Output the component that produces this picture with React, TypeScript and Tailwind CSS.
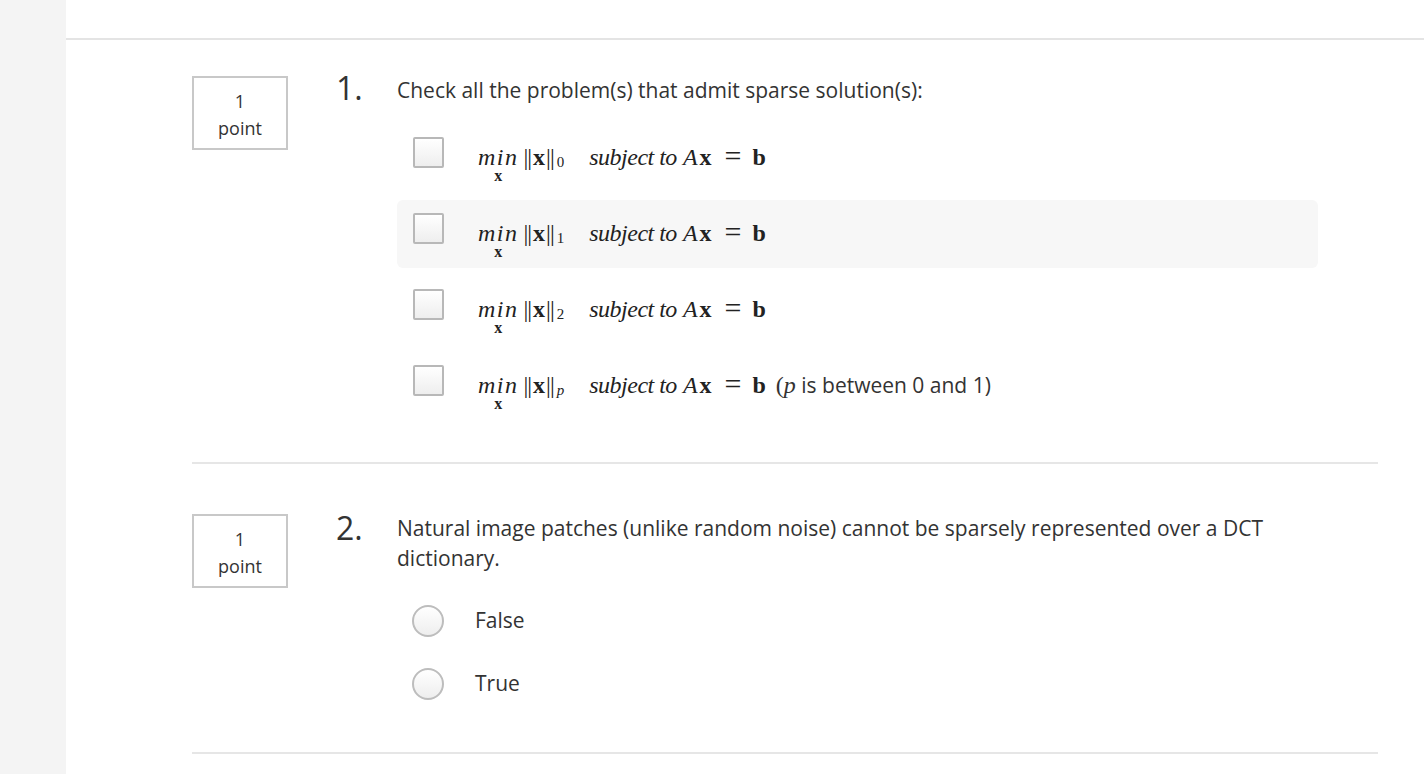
import React from "react"

const sans = "font-['Open_Sans',_'Liberation_Sans',_sans-serif]"
const serif = "font-['Liberation_Serif',_'Times_New_Roman',_serif]"

function PointBox() {
  return (
    <div className="w-[96px] h-[74px] shrink-0 border-2 border-[#c8c8c8] flex flex-col items-center justify-center pt-[3px] text-[18px] leading-[27px] text-[#333]">
      <span>1</span>
      <span>point</span>
    </div>
  )
}

function Checkbox() {
  return (
    <div className="w-[31px] h-[31px] shrink-0 rounded-[2px] border-2 border-[#b8b8b8] bg-gradient-to-b from-white to-[#eeeeee]" />
  )
}

function Radio() {
  return (
    <div className="w-[32px] h-[32px] shrink-0 rounded-full border-2 border-[#bdbdbd] bg-gradient-to-b from-white to-[#eeeeee]" />
  )
}

function Formula({ sub, extra }: { sub: string; extra?: boolean }) {
  return (
    <span className={`inline-flex items-baseline ${serif} text-[24px] leading-[24px] text-[#222]`}>
      <span className="inline-flex flex-col items-center">
        <span className="italic tracking-[1.5px] leading-[18px]">min</span>
        <span className="font-bold text-[16px] leading-[12px] mt-[4px]">x</span>
      </span>
      <span className="ml-[5px] tracking-[-1px]">||</span>
      <span className="font-bold ml-[2px]">x</span>
      <span className="ml-[1px] tracking-[-1px]">||</span>
      <span className={`text-[15px] relative top-[2px] ml-[3px] ${sub === "p" ? "italic" : ""}`}>{sub}</span>
      <span className="italic ml-[25px] tracking-[-0.5px]">subject to</span>
      <span className="italic ml-[6px]">A</span>
      <span className="font-bold ml-[2px]">x</span>
      <span className="text-[30px] ml-[13px] mr-[11px] relative top-[1px]">=</span>
      <span className="font-bold">b</span>
      {extra && (
        <span className={`ml-[10px] ${sans} text-[21px] text-[#333]`}>
          <span className={`${serif} text-[24px]`}>(</span>
          <span className={`${serif} italic text-[24px]`}>p</span> is between 0 and 1)
        </span>
      )}
    </span>
  )
}

const options = [
  { sub: "0", hl: false },
  { sub: "1", hl: true },
  { sub: "2", hl: false },
  { sub: "p", hl: false, extra: true },
]

export default function App() {
  return (
    <div className={`flex min-h-screen bg-white ${sans} text-[#333]`}>
      <div className="w-[66px] shrink-0 bg-[#f4f4f4]" />
      <div className="flex-1">
        <div className="h-[38px]" />
        <div className="h-[2px] bg-[#e4e4e4]" />
        <div className="pl-[126px] pr-[46px]">
          {/* Question 1 */}
          <div className="flex pt-[35px] pb-[42px] border-b-2 border-[#e6e6e6]">
            <div className="mt-[1px]">
              <PointBox />
            </div>
            <div className="w-[61px] ml-[48px] shrink-0 text-[32px] leading-8 -mt-[3px]">1.</div>
            <div className="flex-1">
              <p className="text-[21px] leading-[30px]">Check all the problem(s) that admit sparse solution(s):</p>
              <div className="mt-[19px] mr-[60px] flex flex-col gap-2">
                {options.map((o) => (
                  <div
                    key={o.sub}
                    className={`h-[68px] flex items-start pt-[13px] pl-[16px] rounded-md ${o.hl ? "bg-[#f7f7f7]" : ""}`}
                  >
                    <Checkbox />
                    <div className="ml-[34px] mt-[6px]">
                      <Formula sub={o.sub} extra={o.extra} />
                    </div>
                  </div>
                ))}
              </div>
            </div>
          </div>

          {/* Question 2 */}
          <div className="flex pt-[49px] pb-[41px] border-b-2 border-[#e6e6e6]">
            <div className="mt-[1px]">
              <PointBox />
            </div>
            <div className="w-[61px] ml-[48px] shrink-0 text-[32px] leading-8 -mt-[1px]">2.</div>
            <div className="flex-1">
              <p className="text-[21px] leading-[30px] mr-[60px]">
                Natural image patches (unlike random noise) cannot be sparsely represented over a DCT dictionary.
              </p>
              <div className="mt-[20px] flex flex-col gap-2">
                {["False", "True"].map((t) => (
                  <div key={t} className="h-[55px] flex items-center pl-[15px]">
                    <Radio />
                    <span className="ml-[31px] text-[21px]">{t}</span>
                  </div>
                ))}
              </div>
            </div>
          </div>
        </div>
      </div>
    </div>
  )
}
